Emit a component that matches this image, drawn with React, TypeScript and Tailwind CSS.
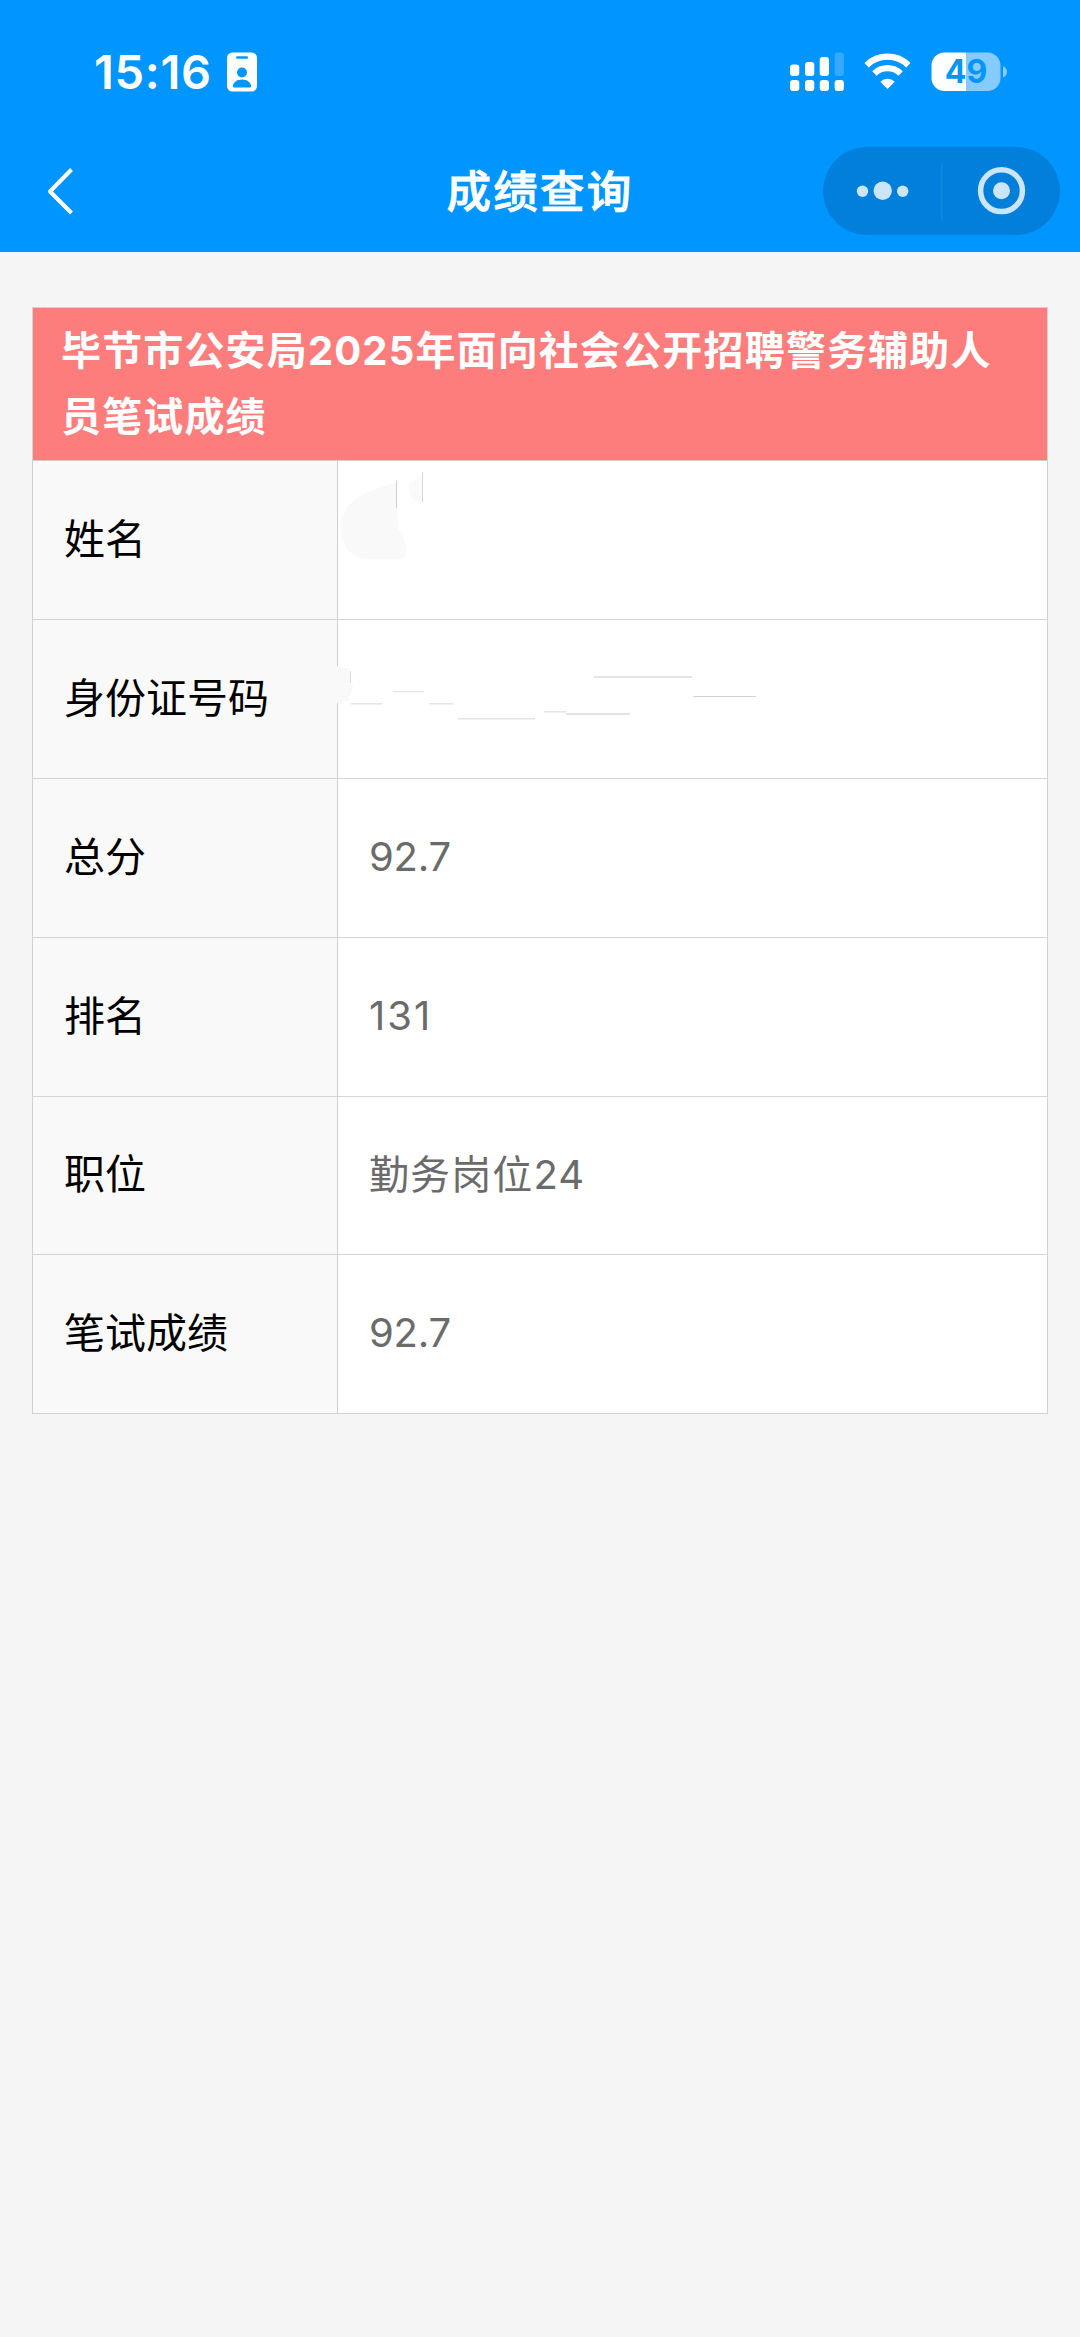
const rows = [
  { label: "姓名", value: "", height: "h-[159px]", tracking: "" },
  { label: "身份证号码", value: "", height: "h-[159px]", tracking: "" },
  { label: "总分", value: "92.7", height: "h-[159px]", tracking: "tracking-[-0.2px]" },
  { label: "排名", value: "131", height: "h-[159px]", tracking: "tracking-[2px]" },
  { label: "职位", value: "勤务岗位24", height: "h-[158px]", tracking: "tracking-[1.1px]" },
  { label: "笔试成绩", value: "92.7", height: "h-[158px]", tracking: "tracking-[-0.2px]" },
];

function BadgeIcon() {
  return (
    <svg className="ml-[15px] h-10 w-[30px] shrink-0" viewBox="0 0 30 40">
      <rect x="0" y="0.5" width="30" height="39" rx="5.5" fill="#fff" />
      <rect x="9" y="4.2" width="12" height="2.6" rx="1.3" fill="#0095ff" />
      <circle cx="15" cy="20.5" r="5" fill="#0095ff" />
      <path d="M6 34.2C6 30.2 10 27.4 15 27.4s9 2.8 9 6.8c0 .8-.5 1.3-1.3 1.3H7.3C6.5 35.5 6 35 6 34.2Z" fill="#0095ff" />
    </svg>
  );
}

function SignalIcon() {
  return (
    <svg className="h-10 w-[54px] shrink-0" viewBox="0 0 54 40" fill="#fff">
      <rect x="0" y="12.5" width="9.3" height="11.5" rx="3" />
      <rect x="15" y="10" width="9.3" height="14" rx="3" />
      <rect x="29.7" y="5" width="9.3" height="19" rx="3" />
      <rect x="44.6" y="0.5" width="9.3" height="23.5" rx="3" opacity="0.2" />
      <rect x="0" y="28" width="9.3" height="11" rx="3" />
      <rect x="15" y="28" width="9.3" height="11" rx="3" />
      <rect x="29.7" y="28" width="9.3" height="11" rx="3" />
      <rect x="44.6" y="28" width="9.3" height="11" rx="3" />
    </svg>
  );
}

function WifiIcon() {
  return (
    <svg className="ml-5 h-10 w-[47px] shrink-0" viewBox="0 0 47 40">
      <g fill="none" stroke="#fff" strokeWidth="6.2">
        <path d="M2.6 13.2A30 30 0 0 1 44.4 13.2" />
        <path d="M10.4 21.5A18.6 18.6 0 0 1 36.6 21.5" />
      </g>
      <path d="M23.5 36.9L16.3 29.7A10.3 10.3 0 0 1 30.7 29.7Z" fill="#fff" />
    </svg>
  );
}

function BatteryIcon() {
  return (
    <div className="relative ml-5 h-10 w-[77px] shrink-0">
      <svg className="block h-10 w-[77px]" viewBox="0 0 77 40">
        <path d="M35 .5H56.5A13 13 0 0 1 69.5 13.5V26A13 13 0 0 1 56.5 39H35Z" fill="#86cbff" />
        <path d="M35 .5H13.5A13 13 0 0 0 .5 13.5V26A13 13 0 0 0 13.5 39H35Z" fill="#fff" />
        <path d="M72 14.2C74.5 15 76 17.2 76 19.8S74.5 24.6 72 25.4Z" fill="#86cbff" />
      </svg>
      <span className="absolute left-0 top-0 w-[70px] text-center text-[32px] font-bold leading-10 text-[#0095ff]">
        49
      </span>
    </div>
  );
}

function Capsule() {
  return (
    <svg className="h-[88px] w-[237px] shrink-0" viewBox="0 0 237 88">
      <rect width="237" height="88" rx="44" fill="#017fdb" />
      <g fill="#cce5f8">
        <circle cx="39.5" cy="44.3" r="5.7" />
        <circle cx="59.7" cy="43.7" r="9.2" />
        <circle cx="79.7" cy="44.3" r="5.7" />
        <circle cx="178.5" cy="43.7" r="8.5" />
      </g>
      <rect x="118" y="17" width="1.5" height="56" fill="#0f88e0" />
      <circle cx="178.5" cy="43.7" r="20.9" fill="none" stroke="#cce5f8" strokeWidth="5.5" />
    </svg>
  );
}

function NameSmudge() {
  return (
    <svg className="absolute left-0 top-0 h-[158px] w-[120px]" viewBox="0 0 120 158">
      <path d="M58 22C30 28 3 40 3 66C3 86 14 98 30 98H66C70 90 68 78 60 68Z" fill="#f9f9f9" />
      <path d="M84 14L71 22Q70 42 84 42Z" fill="#fafafa" />
      <rect x="58" y="20" width="1" height="27" fill="#cfcfcf" />
      <rect x="84" y="11" width="1" height="30" fill="#d6d6d6" />
    </svg>
  );
}

function IdSmudge() {
  return (
    <svg className="absolute -left-px top-0 h-[158px] w-[430px]" viewBox="0 0 430 158">
      <path d="M0 46L13 49V58L16 66L12 80L0 83Z" fill="#f9f9f9" />
      <rect x="13" y="51" width="1" height="12" fill="#dcdcdc" />
      <g fill="#e4e4e4">
        <rect x="14" y="83" width="31" height="1.5" />
        <rect x="56" y="71" width="31" height="1.2" />
        <rect x="92" y="83" width="24" height="1.5" />
        <rect x="121" y="98" width="77" height="1.5" />
        <rect x="207" y="91" width="22" height="1.5" />
        <rect x="229" y="93" width="64" height="2" />
        <rect x="257" y="56" width="98" height="2" />
        <rect x="356" y="76" width="63" height="1" fill="#d2d2d2" />
      </g>
    </svg>
  );
}

export default function App() {
  return (
    <div className="h-[2337px] w-[1080px] overflow-hidden bg-[#f5f5f5] font-[Inter,'Noto_Sans_CJK_SC',sans-serif]">
      <header className="h-[252px] bg-[#0095ff] text-white">
        <div className="flex h-[129px] items-center justify-between pl-[94px] pr-[72px] pt-[15px]">
          <div className="flex items-center">
            <span className="text-[47px] font-semibold leading-10 tracking-[0.7px]">15:16</span>
            <BadgeIcon />
          </div>
          <div className="flex items-center">
            <SignalIcon />
            <WifiIcon />
            <BatteryIcon />
          </div>
        </div>
        <div className="grid h-[123px] grid-cols-[300px_1fr_300px] items-center">
          <svg className="ml-[46px] h-12 w-8" viewBox="0 0 32 48">
            <path d="M25.5 2.5L4 24.5L25.5 46" fill="none" stroke="#fff" strokeWidth="4" strokeLinejoin="round" />
          </svg>
          <h1 className="pt-[3px] text-center text-[44.5px] font-medium leading-[60px] tracking-[2.2px] [-webkit-text-stroke:0.8px_white]">
            成绩查询
          </h1>
          <div className="flex justify-end pr-5">
            <Capsule />
          </div>
        </div>
      </header>

      <main className="mx-8 mt-[55px] w-[1016px] border border-[#d2d2d2] bg-white">
        <h2 className="h-[153px] border-b border-[#d8c8c8] bg-[#fd7d7d] pl-[28px] pt-[10px] text-[40px] font-bold leading-[66px] tracking-[1.15px] text-white">
          毕节市公安局2025年面向社会公开招聘警务辅助人
          <br />
          员笔试成绩
        </h2>
        {rows.map((row, i) => (
          <div
            key={row.label}
            className={`flex ${row.height} border-[#d4d4d4] ${i < rows.length - 1 ? "border-b" : ""}`}
          >
            <div className="flex w-[305px] shrink-0 items-center border-r border-[#cfcfcf] bg-[#f9f9f9] pb-px pl-[31px] text-[41px] text-black">
              {row.label}
            </div>
            <div className={`relative flex flex-1 items-center pb-[2px] pl-[31px] text-[40px] text-[#6b6b6b] ${row.tracking}`}>
              {i === 0 && <NameSmudge />}
              {i === 1 && <IdSmudge />}
              {row.value}
            </div>
          </div>
        ))}
      </main>
    </div>
  );
}
